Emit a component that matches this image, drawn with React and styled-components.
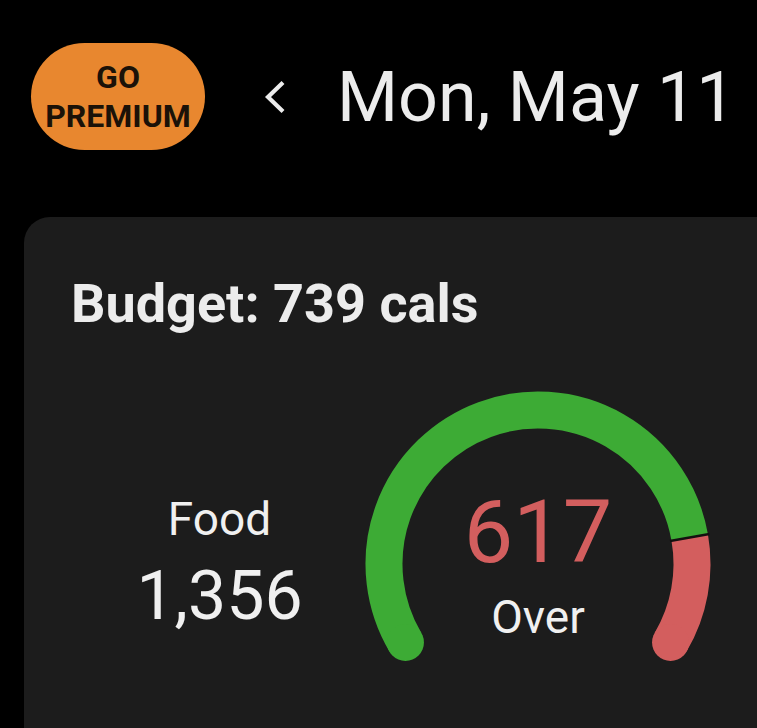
import React from 'react';
import styled, { createGlobalStyle } from 'styled-components';

const GlobalStyle = createGlobalStyle`
  html, body {
    margin: 0;
    padding: 0;
    background: #000;
  }
  body {
    font-family: Roboto, "Noto Sans", sans-serif;
  }
`;

const Screen = styled.div`
  width: 757px;
  height: 728px;
  overflow: hidden;
  background: #000;
  display: flex;
  flex-direction: column;
`;

const Header = styled.div`
  display: flex;
  align-items: center;
  padding: 43px 0 0 31px;
`;

const PremiumButton = styled.button`
  width: 174px;
  height: 107px;
  border: none;
  border-radius: 54px;
  background: #e8872f;
  color: #1b1208;
  font-family: Roboto, sans-serif;
  font-weight: 700;
  font-size: 32px;
  line-height: 39px;
  padding: 0;
  display: flex;
  flex-direction: column;
  align-items: center;
  justify-content: center;
`;

const BackButton = styled.div`
  display: flex;
  margin-left: 58px;
  margin-right: 50px;
`;

const DateTitle = styled.h1`
  margin: 0;
  font-size: 70px;
  font-weight: 400;
  line-height: 1;
  color: #ececec;
  white-space: nowrap;
`;

const Card = styled.div`
  margin: 67px -40px 0 24px;
  flex: 1;
  background: #1c1c1c;
  border-radius: 26px 26px 0 0;
  padding: 60px 0 0 47px;
`;

const Budget = styled.h2`
  margin: 0;
  font-size: 54px;
  font-weight: 700;
  line-height: 1;
  color: #ececec;
`;

const Row = styled.div`
  display: flex;
  align-items: flex-start;
  margin-top: 58px;
`;

const FoodColumn = styled.div`
  width: 287px;
  padding-left: 10px;
  box-sizing: border-box;
  display: flex;
  flex-direction: column;
  align-items: center;
  margin-top: 107px;
`;

const Label = styled.div`
  font-size: ${({ size }) => size}px;
  line-height: 1;
  margin-top: ${({ gap }) => gap || 0}px;
  color: ${({ color }) => color || '#f0f0f0'};
`;

const Gauge = styled.div`
  position: relative;
  width: 360px;
  height: 300px;
`;

const GaugeText = styled.div`
  position: absolute;
  left: 0;
  right: 0;
  top: 99px;
  display: flex;
  flex-direction: column;
  align-items: center;
`;

const CX = 180;
const CY = 175;
const R = 154;

const pt = (deg) => {
  const a = (deg * Math.PI) / 180;
  return [CX + R * Math.cos(a), CY - R * Math.sin(a)];
};

const arc = (from, to) => {
  const [x1, y1] = pt(from);
  const [x2, y2] = pt(to);
  const large = from - to > 180 ? 1 : 0;
  return `M ${x1} ${y1} A ${R} ${R} 0 ${large} 1 ${x2} ${y2}`;
};

function GaugeArc() {
  const start = 210.6;
  const split = 9.9;
  const end = -30.6;
  const [sx, sy] = pt(start);
  const [ex, ey] = pt(end);
  const [bx, by] = pt(split);
  const a = (split * Math.PI) / 180;
  const half = 20;
  return (
    <svg width="360" height="300" viewBox="0 0 360 300">
      <path d={arc(start, split)} fill="none" stroke="#3dab35" strokeWidth="37" />
      <circle cx={sx} cy={sy} r="18.5" fill="#3dab35" />
      <path d={arc(split, end)} fill="none" stroke="#d35e5e" strokeWidth="37" />
      <circle cx={ex} cy={ey} r="18.5" fill="#d35e5e" />
      <line
        x1={bx - half * Math.cos(a)}
        y1={by + half * Math.sin(a)}
        x2={bx + half * Math.cos(a)}
        y2={by - half * Math.sin(a)}
        stroke="#141010"
        strokeWidth="2.5"
      />
    </svg>
  );
}

export default function App() {
  return (
    <>
      <GlobalStyle />
      <Screen>
        <Header>
          <PremiumButton>
            <span>GO</span>
            <span>PREMIUM</span>
          </PremiumButton>
          <BackButton>
            <svg width="24" height="36" viewBox="0 0 24 36">
              <path d="M20 3.5 L5 18 L20 32.5" fill="none" stroke="#ececec" strokeWidth="4.2" />
            </svg>
          </BackButton>
          <DateTitle>Mon, May 11</DateTitle>
        </Header>
        <Card>
          <Budget>Budget: 739 cals</Budget>
          <Row>
            <FoodColumn>
              <Label size={46}>Food</Label>
              <Label size={68} gap={20}>1,356</Label>
            </FoodColumn>
            <Gauge>
              <GaugeArc />
              <GaugeText>
                <Label size={88} color="#d35e5e">617</Label>
                <Label size={46} gap={18}>Over</Label>
              </GaugeText>
            </Gauge>
          </Row>
        </Card>
      </Screen>
    </>
  );
}
